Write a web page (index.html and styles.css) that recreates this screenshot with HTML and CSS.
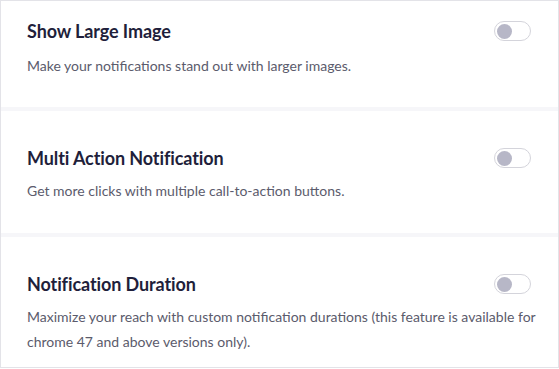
FILE: index.html
```html
<!DOCTYPE html>
<html lang="en">
<head>
  <meta charset="UTF-8">
  <title>Notification Settings</title>
  <link rel="stylesheet" href="styles.css">
</head>
<body>
  <div class="panel">
    <div class="setting setting-first">
      <div class="setting-head">
        <h3>Show Large Image</h3>
        <span class="toggle"><span class="knob"></span></span>
      </div>
      <p>Make your notifications stand out with larger images.</p>
    </div>

    <div class="setting">
      <div class="setting-head">
        <h3>Multi Action Notification</h3>
        <span class="toggle"><span class="knob"></span></span>
      </div>
      <p>Get more clicks with multiple call-to-action buttons.</p>
    </div>

    <div class="setting setting-last">
      <div class="setting-head">
        <h3>Notification Duration</h3>
        <span class="toggle"><span class="knob"></span></span>
      </div>
      <p>Maximize your reach with custom notification durations (this feature is available for chrome 47 and above versions only).</p>
    </div>
  </div>
</body>
</html>
```

FILE: styles.css
```css
* {
  margin: 0;
  padding: 0;
  box-sizing: border-box;
  font-family: 'Lato', 'Noto Sans', sans-serif;
}

body {
  background: #fff;
  width: 559px;
  height: 369px;
}

.panel {
  width: 559px;
  height: 368px;
  display: flex;
  flex-direction: column;
  gap: 4px;
  background: #f6f6f9;
  border: 1px solid #e3e3e8;
}

.setting {
  background: #fff;
  height: 122px;
  padding: 35px 20px 0 26px;
  flex: none;
}

.setting-first {
  height: 106px;
  padding-top: 18px;
}

.setting-last {
  flex: 1;
  height: auto;
  padding-top: 35px;
}

.setting-head {
  display: flex;
  justify-content: space-between;
  align-items: center;
  height: 24px;
  margin-bottom: 8px;
}

.setting-first .setting-head {
  margin-bottom: 10px;
}

.setting-last .setting-head {
  margin-bottom: 8px;
}

.setting h3 {
  font-size: 18px;
  font-weight: 700;
  line-height: 24px;
  color: #1f1f3b;
  letter-spacing: -0.1px;
}

.setting p {
  font-size: 14px;
  line-height: 25px;
  color: #5b5b6c;
}

.toggle {
  display: flex;
  align-items: center;
  width: 37px;
  height: 20px;
  margin-right: 7px;
  padding: 0 2px;
  border: 1.5px solid #d4d4db;
  border-radius: 10px;
  background: #fff;
}

.knob {
  width: 15px;
  height: 15px;
  border-radius: 50%;
  background: #b7b7c7;
}
```
